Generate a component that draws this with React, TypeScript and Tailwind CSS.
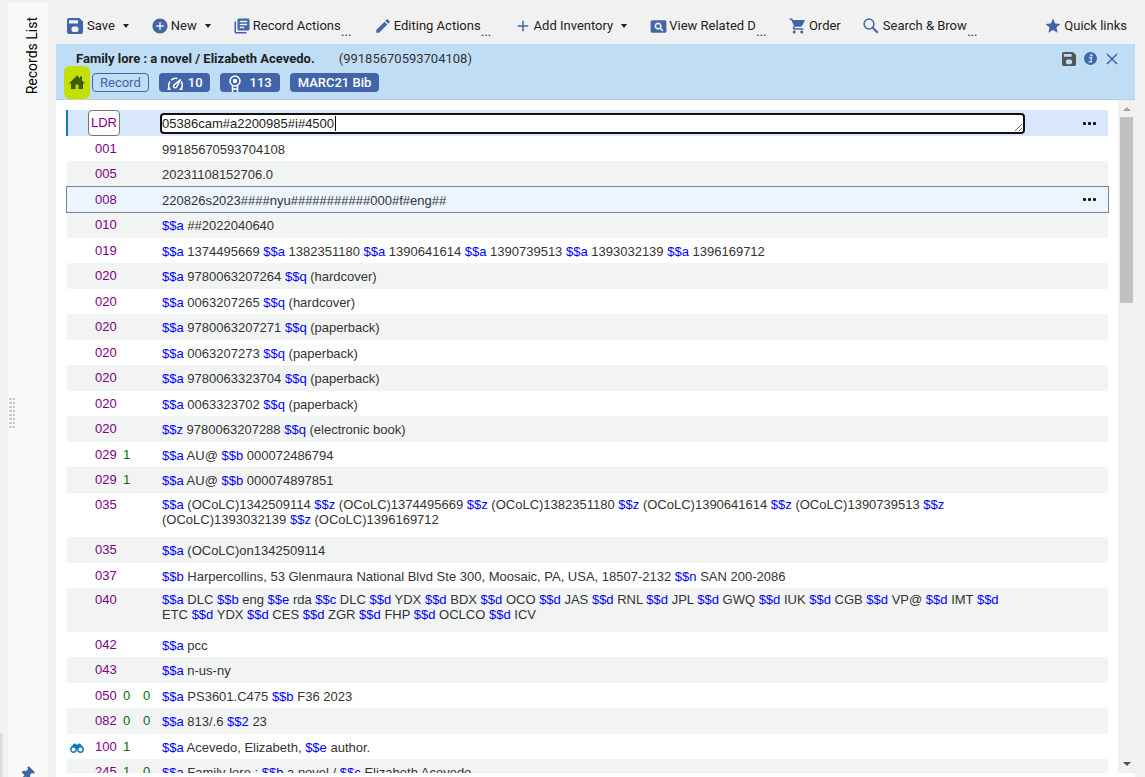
import { useState } from "react";
import type { ReactNode } from "react";
import { FaThumbtack } from "react-icons/fa";
import { MdAdd, MdAddCircle, MdEdit, MdLibraryBooks, MdPageview, MdShoppingCart, MdStar } from "react-icons/md";

type Field = {
  tag: string;
  ind1?: string;
  ind2?: string;
  value: string;
  tall?: boolean;
  hovered?: boolean;
  linked?: boolean;
};

const fields: Field[] = [
  { tag: "001", value: "99185670593704108" },
  { tag: "005", value: "20231108152706.0" },
  { tag: "008", value: "220826s2023####nyu###########000#f#eng##", hovered: true },
  { tag: "010", value: "$$a ##2022040640" },
  { tag: "019", value: "$$a 1374495669 $$a 1382351180 $$a 1390641614 $$a 1390739513 $$a 1393032139 $$a 1396169712" },
  { tag: "020", value: "$$a 9780063207264 $$q (hardcover)" },
  { tag: "020", value: "$$a 0063207265 $$q (hardcover)" },
  { tag: "020", value: "$$a 9780063207271 $$q (paperback)" },
  { tag: "020", value: "$$a 0063207273 $$q (paperback)" },
  { tag: "020", value: "$$a 9780063323704 $$q (paperback)" },
  { tag: "020", value: "$$a 0063323702 $$q (paperback)" },
  { tag: "020", value: "$$z 9780063207288 $$q (electronic book)" },
  { tag: "029", ind1: "1", value: "$$a AU@ $$b 000072486794" },
  { tag: "029", ind1: "1", value: "$$a AU@ $$b 000074897851" },
  {
    tag: "035",
    tall: true,
    value:
      "$$a (OCoLC)1342509114 $$z (OCoLC)1374495669 $$z (OCoLC)1382351180 $$z (OCoLC)1390641614 $$z (OCoLC)1390739513 $$z (OCoLC)1393032139 $$z (OCoLC)1396169712",
  },
  { tag: "035", value: "$$a (OCoLC)on1342509114" },
  { tag: "037", value: "$$b Harpercollins, 53 Glenmaura National Blvd Ste 300, Moosaic, PA, USA, 18507-2132 $$n SAN 200-2086" },
  {
    tag: "040",
    tall: true,
    value:
      "$$a DLC $$b eng $$e rda $$c DLC $$d YDX $$d BDX $$d OCO $$d JAS $$d RNL $$d JPL $$d GWQ $$d IUK $$d CGB $$d VP@ $$d IMT $$d ETC $$d YDX $$d CES $$d ZGR $$d FHP $$d OCLCO $$d ICV",
  },
  { tag: "042", value: "$$a pcc" },
  { tag: "043", value: "$$a n-us-ny" },
  { tag: "050", ind1: "0", ind2: "0", value: "$$a PS3601.C475 $$b F36 2023" },
  { tag: "082", ind1: "0", ind2: "0", value: "$$a 813/.6 $$2 23" },
  { tag: "100", ind1: "1", value: "$$a Acevedo, Elizabeth, $$e author.", linked: true },
  { tag: "245", ind1: "1", ind2: "0", value: "$$a Family lore : $$b a novel / $$c Elizabeth Acevedo." },
];

function SaveIcon({ className }: { className: string }) {
  return (
    <svg viewBox="0 0 16 16" className={className} fill="currentColor" aria-hidden="true">
      <path
        fillRule="evenodd"
        d="M2 0h10.500L16 3.500V14a2 2 0 0 1-2 2H2a2 2 0 0 1-2-2V2a2 2 0 0 1 2-2ZM2 2.200v3.300h9V2.200ZM6.500 8.500a2 2 0 0 0-2 2v1.500a2 2 0 0 0 2 2h3a2 2 0 0 0 2-2v-1.500a2 2 0 0 0-2-2Z"
      />
    </svg>
  );
}

function SearchIcon() {
  return (
    <svg viewBox="0 0 16 16" className="size-4" fill="none" stroke="currentColor" aria-hidden="true">
      <circle cx="6" cy="6" r="4.900" strokeWidth="1.500" />
      <path d="m9.800 9.800 5 5" strokeWidth="2" />
    </svg>
  );
}

function HomeIcon() {
  return (
    <svg viewBox="0 0 16 15" className="h-[15px] w-4" fill="currentColor" aria-hidden="true">
      <path d="M8 .500 11 3.500V1.500h2v4l3 3h-2V14H9.500V9.500h-3V14H2V8.500H0Z" />
    </svg>
  );
}

function BinocularsIcon() {
  return (
    <svg viewBox="0 0 14 10" className="h-2.5 w-3.5" aria-hidden="true">
      <path d="M3 1.500Q4 0 5.500.500L6 1.500h2l.500-1Q10 0 11 1.500L14 6H0Z" fill="currentColor" />
      <circle cx="3.500" cy="6.500" r="2.700" fill="white" stroke="currentColor" strokeWidth="1.400" />
      <circle cx="10.500" cy="6.500" r="2.700" fill="white" stroke="currentColor" strokeWidth="1.400" />
    </svg>
  );
}

function InfoIcon() {
  return (
    <svg viewBox="0 0 16 16" className="size-[13px]" aria-hidden="true">
      <circle cx="8" cy="8" r="8" fill="#4165a8" />
      <circle cx="9" cy="4" r="1.500" fill="#bfddf5" />
      <path d="M6 7h3.500l-1.500 5h1.500M5.500 12.200h4.500" stroke="#bfddf5" strokeWidth="1.600" fill="none" />
    </svg>
  );
}

function GaugeIcon() {
  return (
    <svg viewBox="0 0 18 16" className="h-4 w-[18px]" fill="none" stroke="currentColor" strokeWidth="1.500" aria-hidden="true">
      <path d="M1.500 14.200h3.200M3.500 14A7 7 0 0 1 4 6.500M5 5.200A7 7 0 0 1 11.500 3.500M15.200 6.500A7 7 0 0 1 15 14M13.500 14.200h3" />
      <path d="M14.500 4.500 8.500 9.500a1.700 1.700 0 1 0 2.300 2.200Z" />
    </svg>
  );
}

function MedalIcon() {
  return (
    <svg viewBox="0 0 14 18" className="h-[18px] w-3.5" fill="none" stroke="currentColor" strokeWidth="1.500" aria-hidden="true">
      <circle cx="7" cy="7" r="5" />
      <circle cx="7" cy="7" r="2.200" fill="currentColor" stroke="none" />
      <path d="M4.500 11.500V18M9.500 11.500V18M4.500 15h5" />
    </svg>
  );
}

function Caret() {
  return <span className="ml-2 border-x-[3px] border-t-4 border-x-transparent border-t-[#222]" />;
}

type ToolProps = { icon: ReactNode; label: string; menu?: boolean; cut?: boolean };

function Tool({ icon, label, menu, cut }: ToolProps) {
  return (
    <button type="button" className="flex h-6 items-center whitespace-nowrap">
      <span className="flex w-5 shrink-0 items-center text-[#4165a8]">{icon}</span>
      {label}
      {menu && <Caret />}
      {cut && <span className="w-[11px] self-end leading-3">...</span>}
    </button>
  );
}

/* Subfield codes ($$a, $$b ...) are shown in blue */
function Subfields({ value }: { value: string }) {
  return value.split(/(\$\$\w)/).map((part, i) =>
    part.startsWith("$$") ? (
      <span key={i} className="text-[#0000ff]">
        {part}
      </span>
    ) : (
      part
    ),
  );
}

function RowMenu({ tag }: { tag: string }) {
  return (
    <button type="button" aria-label={`Actions for ${tag}`} className="flex h-4 items-center gap-0.5">
      <span className="size-[3px] rounded-[1px] bg-[#111]" />
      <span className="size-[3px] rounded-[1px] bg-[#111]" />
      <span className="size-[3px] rounded-[1px] bg-[#111]" />
    </button>
  );
}

function FieldRow({ field, shaded }: { field: Field; shaded: boolean }) {
  const height = field.tall ? "h-11" : shaded ? "h-[26px]" : "h-[25px]";
  const color = field.hovered ? "bg-[#ebf4ff] outline outline-[#808488]" : shaded ? "bg-[#f2f4f4]" : "bg-white";
  const pad = field.tall ? "pt-1 align-top" : shaded ? "align-middle" : "pt-0.5 align-middle";

  return (
    <tr className={`${height} ${color}`}>
      <td className="pl-[3px] pt-0.5 align-middle text-[#1478b4]">{field.linked && <BinocularsIcon />}</td>
      <td className={`${pad} pb-0.5 text-[#800080]`}>{field.tag}</td>
      <td className={`${pad} pb-0.5 text-[#007000]`}>{field.ind1}</td>
      <td className={`${pad} pb-0.5 text-[#007000]`}>{field.ind2}</td>
      <td className={pad}>
        <Subfields value={field.value} />
      </td>
      <td className="pl-[59px] align-middle">{field.hovered && <RowMenu tag={field.tag} />}</td>
    </tr>
  );
}

export default function App() {
  const [leader, setLeader] = useState("05386cam#a2200985#i#4500");

  return (
    <div className="flex h-screen overflow-hidden bg-[#f1f1f1] font-[Roboto,sans-serif] text-[13px] text-[#222]">
      {/* Edge of the navigation drawer */}
      <div className="mt-auto h-11 w-2 shrink-0 bg-linear-to-r from-[#d4d4d4] to-[#f1f1f1] to-50%" />

      {/* Collapsed records list */}
      <aside className="mt-[3px] flex w-10 shrink-0 flex-col bg-[#fafafa]">
        <button type="button" className="mt-3.5 ml-3.5 rotate-180 self-start text-sm text-black [writing-mode:vertical-rl]">
          Records List
        </button>
        <div className="flex flex-1 items-center pb-9">
          <div className="ml-px grid w-1.5 grid-cols-2 gap-x-px gap-y-0.5">
            {Array.from({ length: 16 }, (_, i) => (
              <span key={i} className="h-0.5 bg-[#c8c8c8]" />
            ))}
          </div>
        </div>
        <button type="button" aria-label="Pin" className="-mb-1 ml-3 self-start text-[#4165a8]">
          <FaThumbtack className="size-3.5 rotate-45" />
        </button>
      </aside>

      <main className="ml-2 mr-2.5 flex min-w-0 flex-1 flex-col">
        <nav className="flex h-11 shrink-0 items-center gap-[22px] pl-[11px] pr-2 pt-2">
          <Tool icon={<SaveIcon className="size-4" />} label="Save" menu />
          <Tool icon={<MdAddCircle className="size-[18px]" />} label="New" menu />
          <Tool icon={<MdLibraryBooks className="size-[18px]" />} label="Record Actions" cut />
          <Tool icon={<MdEdit className="size-[18px]" />} label="Editing Actions" cut />
          <Tool icon={<MdAdd className="size-[18px]" />} label="Add Inventory" menu />
          <Tool icon={<MdPageview className="size-[19px]" />} label="View Related D" cut />
          <Tool icon={<MdShoppingCart className="size-[18px]" />} label="Order" />
          <Tool icon={<SearchIcon />} label="Search & Brow" cut />
          <div className="ml-auto">
            <Tool icon={<MdStar className="size-[18px]" />} label="Quick links" />
          </div>
        </nav>

        <header className="flex h-14 shrink-0 justify-between border-b border-[#c3ccd4] bg-[#bfddf5] pr-4">
          <div className="flex flex-col">
            <div className="mt-[7px] flex h-[15px] items-center gap-6 pl-5">
              <h1 className="font-bold">Family lore : a novel / Elizabeth Acevedo.</h1>
              <span className="text-[#333]">(99185670593704108)</span>
            </div>
            <div className="flex items-center gap-2.5 pl-2">
              <div className="flex items-center gap-0.5">
                <span className="flex h-[33px] w-[26px] items-center justify-center rounded-md bg-[#c3e000] text-[#3c5a08]">
                  <HomeIcon />
                </span>
                <span className="h-[19px] rounded-sm border border-[#4165a8] px-[7px] leading-[17px] text-[#4165a8]">Record</span>
              </div>
              <span className="flex h-[19px] items-center gap-1 overflow-hidden rounded-sm bg-[#4165a8] px-[7px] font-medium text-white">
                <GaugeIcon /> 10
              </span>
              <span className="flex h-[19px] items-center gap-2 overflow-hidden rounded-sm bg-[#4165a8] px-2 font-medium text-white">
                <MedalIcon /> 113
              </span>
              <span className="flex h-[19px] items-center rounded-sm bg-[#4165a8] px-2 font-medium text-white">MARC21 Bib</span>
            </div>
          </div>
          <div className="flex h-[29px] items-center gap-2 text-[#4165a8]">
            <button type="button" aria-label="Save record" className="text-[#555]">
              <SaveIcon className="size-3.5" />
            </button>
            <button type="button" aria-label="Record information">
              <InfoIcon />
            </button>
            <button type="button" aria-label="Close">
              <svg viewBox="0 0 14 14" className="size-3.5" stroke="currentColor" strokeWidth="1.500" aria-hidden="true">
                <path d="m2 2 10 10M12 2 2 12" />
              </svg>
            </button>
          </div>
        </header>

        <div className="flex min-h-0 flex-1 bg-white pb-1">
          <div className="min-w-0 flex-1 overflow-hidden pl-[11px] pr-2.5 pt-2.5">
            <table className="w-full table-fixed font-['Liberation_Sans',Arial,sans-serif] leading-[15px] text-[#333]">
              <colgroup>
                <col className="w-7" />
                <col className="w-7" />
                <col className="w-5" />
                <col className="w-[19px]" />
                <col />
                <col className="w-[84px]" />
              </colgroup>
              <tbody>
                <tr className="h-[26px] bg-[#d9e7fd] shadow-[-1px_0_0_#1478b4,inset_1px_0_0_#1478b4]">
                  <td colSpan={4} className="p-0 pl-[21px]">
                    <input
                      aria-label="Field tag"
                      defaultValue="LDR"
                      className="block h-[26px] w-8 rounded-sm border border-[#767676] bg-white pb-0.5 text-center text-[#800080]"
                    />
                  </td>
                  <td className="p-0">
                    <div className="relative -ml-0.5 mr-[-1px]">
                      <textarea
                        aria-label="Leader"
                        rows={1}
                        value={leader}
                        onChange={(e) => setLeader(e.target.value)}
                        className="peer block h-[21px] w-full resize overflow-hidden rounded-sm border-2 border-[#111] bg-white pt-px text-[#222] outline-none"
                      />
                      {/* Insertion point, until the box takes the real one */}
                      <span className="absolute left-[175px] top-[3px] h-[15px] w-px bg-black peer-focus:hidden" />
                    </div>
                  </td>
                  <td className="pl-[59px]">
                    <RowMenu tag="LDR" />
                  </td>
                </tr>
                {fields.map((field, i) => (
                  <FieldRow key={i} field={field} shaded={i % 2 === 1} />
                ))}
              </tbody>
            </table>
          </div>

          {/* Scroll track */}
          <div className="flex w-[17px] shrink-0 flex-col items-center bg-[#f1f1f1] py-[7px]">
            <span className="border-x-4 border-b-4 border-x-transparent border-b-[#a3a3a3]" />
            <span className="mt-1.5 h-[186px] w-[13px] bg-[#c1c1c1]" />
            <span className="mt-auto border-x-4 border-t-4 border-x-transparent border-t-[#505050]" />
          </div>
        </div>
      </main>
    </div>
  );
}
